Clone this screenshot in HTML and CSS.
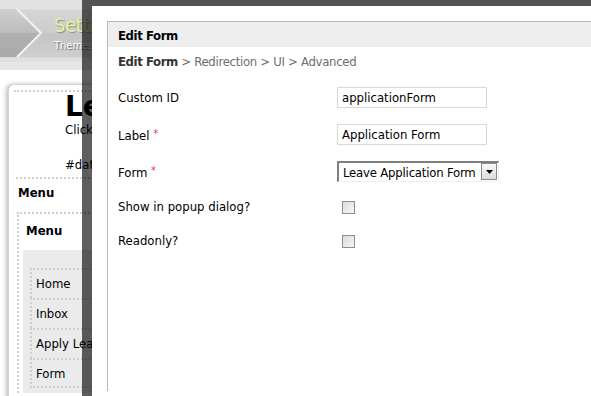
FILE: index.html
```html
<!DOCTYPE html>
<html lang="en">
<head>
  <meta charset="UTF-8">
  <title>Edit Form</title>
  <meta name="viewport" content="width=device-width, initial-scale=1.0">
  <link rel="stylesheet" href="styles.css">
</head>
<body>
  <div class="page">
    <div class="topbar">
      <svg class="chevron" width="50" height="62" viewBox="0 0 50 62">
        <defs>
          <linearGradient id="chev" x1="0" y1="0" x2="0" y2="1">
            <stop offset="0" stop-color="#cfcfcf"/>
            <stop offset="0.5" stop-color="#bdbdbd"/>
            <stop offset="0.51" stop-color="#b0b0b0"/>
            <stop offset="1" stop-color="#a9a9a9"/>
          </linearGradient>
        </defs>
        <polygon points="0,9 16,9 40,33 16,57 0,57" fill="url(#chev)"/>
        <polyline points="17,9 41,33 17,57" fill="none" stroke="#f2f2f2" stroke-width="2"/>
      </svg>
      <div class="brand">
        <div class="brand-title">Settings</div>
        <div class="brand-sub">Themes</div>
      </div>
    </div>
    <div class="subbar"></div>

    <div class="card">
      <div class="card-head">
        <h1>Leave Application</h1>
        <p>Click on a menu to get started.</p>
        <p class="hash">#date.EEE, d MMM yyyy#</p>
      </div>
      <div class="menu-section">
        <div class="menu-title">Menu</div>
        <div class="menu-box">
          <div class="menu-box-title">Menu</div>
          <ul class="menu-list">
            <li>Home</li>
            <li>Inbox</li>
            <li>Apply Leave</li>
            <li>Form</li>
          </ul>
        </div>
      </div>
    </div>
  </div>

  <div class="dialog">
    <div class="panel">
      <div class="panel-header">Edit Form</div>
      <div class="panel-body">
        <div class="crumbs"><b>Edit Form</b> &gt; Redirection &gt; UI &gt; Advanced</div>

        <div class="row">
          <label>Custom ID</label>
          <input type="text" class="text-input" value="applicationForm">
        </div>
        <div class="row">
          <label>Label <span class="req">*</span></label>
          <input type="text" class="text-input" value="Application Form">
        </div>
        <div class="row">
          <label>Form <span class="req">*</span></label>
          <div class="select-wrap">
            <select class="select-input">
              <option>Leave Application Form</option>
            </select>
            <span class="select-btn">
              <svg width="7" height="4" viewBox="0 0 7 4"><polygon points="0,0 7,0 3.5,4" fill="#000"/></svg>
            </span>
          </div>
        </div>
        <div class="row row-check">
          <label>Show in popup dialog?</label>
          <input type="checkbox" class="check">
        </div>
        <div class="row row-check">
          <label>Readonly?</label>
          <input type="checkbox" class="check">
        </div>
      </div>
    </div>
  </div>
</body>
</html>
```

FILE: styles.css
```css
* {
  box-sizing: border-box;
}
body {
  margin: 0;
  width: 591px;
  height: 396px;
  overflow: hidden;
  position: relative;
  font-family: "DejaVu Sans Condensed", "DejaVu Sans", sans-serif;
  font-size: 13px;
  color: #000;
  background-color: #fff;
}

/* page behind the dialog */
.topbar {
  height: 62px;
  display: flex;
  align-items: flex-start;
  background: linear-gradient(#e2e2e2 0, #e2e2e2 9px, #d6d6d6 10px, #cbcbcb 33px, #c4c4c4 34px, #cfcfcf 57px, #e0e0e0 58px);
}
.chevron {
  display: block;
  flex: none;
}
.brand {
  width: 42px;
  overflow: hidden;
  padding: 12px 0 0 4px;
  white-space: nowrap;
}
.brand-title {
  font-size: 20px;
  line-height: 27px;
  letter-spacing: -0.3px;
  color: #e3f1a3;
  text-shadow: 1px 1px 1px #8a8a8a;
}
.brand-sub {
  font-size: 11px;
  line-height: 13px;
  color: #fff;
  text-shadow: 1px 1px 1px #6a6a6a;
}
.subbar {
  height: 8px;
  background-color: #e6e6e6;
}

.card {
  margin: 14px 0 0 8px;
  width: 90px;
  height: 400px;
  overflow: hidden;
  border: 1px solid #d4d4d4;
  border-right: none;
  border-radius: 6px 0 0 6px;
  box-shadow: -2px 0 4px #c0c0c0;
  background-color: #fff;
}
.card-head {
  margin: 5px 0 0 5px;
  border-top: 2px dotted #cfcfcf;
  padding: 0 0 4px 51px;
}
.card-head h1 {
  margin: 0;
  font-family: "DejaVu Sans", sans-serif;
  font-size: 28px;
  line-height: 30px;
  font-weight: bold;
  white-space: nowrap;
}
.card-head p {
  margin: 0;
  line-height: 16px;
  white-space: nowrap;
}
.card-head .hash {
  margin-top: 19px;
}
.menu-section {
  margin: 0 0 0 7px;
  border-top: 2px dotted #cfcfcf;
}
.menu-title {
  padding: 6px 0 0 2px;
  line-height: 16px;
  font-weight: bold;
}
.menu-box {
  margin: 11px 0 0 1px;
  border-top: 2px dotted #cfcfcf;
  border-left: 2px dotted #cfcfcf;
}
.menu-box-title {
  padding: 9px 0 0 7px;
  line-height: 16px;
  font-weight: bold;
}
.menu-list {
  list-style: none;
  margin: 11px 0 0 4px;
  padding: 18px 0 5px 7px;
  background-color: #ebebeb;
}
.menu-list li {
  height: 30px;
  line-height: 28px;
  padding-left: 4px;
  border: 2px dotted #cfcfcf;
  border-bottom: none;
  border-right: none;
  white-space: nowrap;
}
.menu-list li:last-child {
  border-bottom: 2px dotted #cfcfcf;
}

/* dialog */
.dialog {
  position: absolute;
  left: 82px;
  top: -4px;
  width: 600px;
  height: 420px;
  border: 10px solid rgba(0, 0, 0, 0.63);
  background-color: #fff;
  background-clip: padding-box;
  padding: 15px;
}
.panel {
  height: 100%;
  border-top: 1px solid #b9b9b9;
  border-left: 1px solid #b9b9b9;
}
.panel-header {
  height: 25px;
  line-height: 27px;
  padding-left: 10px;
  background-color: #eeeeee;
  font-weight: bold;
  letter-spacing: -0.4px;
}
.panel-body {
  padding: 7px 10px 0 10px;
}
.crumbs {
  line-height: 16px;
  margin-bottom: 9px;
  color: #6e6e6e;
  letter-spacing: -0.3px;
}
.crumbs b {
  color: #333;
  letter-spacing: -0.4px;
}

.row {
  display: grid;
  grid-template-columns: 219px auto;
  align-items: center;
  padding: 8px 0;
}
.row label {
  line-height: 16px;
}
.row-check {
  height: 34px;
  padding: 0;
}
.req {
  color: #f0305a;
  font-size: 11px;
  vertical-align: 3px;
}
.text-input {
  width: 150px;
  height: 21px;
  margin: 0;
  padding: 0 4px;
  border: 1px solid #d8d8d8;
  font: inherit;
  color: #000;
  outline: none;
}
.select-wrap {
  position: relative;
  width: 162px;
  height: 21px;
}
.select-input {
  appearance: none;
  -webkit-appearance: none;
  width: 100%;
  height: 21px;
  margin: 0;
  padding: 0 0 0 4px;
  border-style: solid;
  border-width: 2px 1px 1px 2px;
  border-color: #7f7f7f #f0f0f0 #f0f0f0 #7f7f7f;
  border-radius: 0;
  background-color: #fff;
  font: inherit;
  letter-spacing: -0.2px;
  color: #000;
  outline: none;
}
.select-btn {
  position: absolute;
  top: 2px;
  right: 2px;
  width: 16px;
  height: 17px;
  display: flex;
  align-items: center;
  justify-content: center;
  border: 1px solid #8a8a8a;
  background: linear-gradient(#fafafa, #dcdcdc);
}
.check {
  appearance: none;
  -webkit-appearance: none;
  width: 13px;
  height: 13px;
  margin: 0 0 0 5px;
  border: 1px solid #8e8e8e;
  background: linear-gradient(135deg, #dcdcdc, #f6f6f6);
}
```
